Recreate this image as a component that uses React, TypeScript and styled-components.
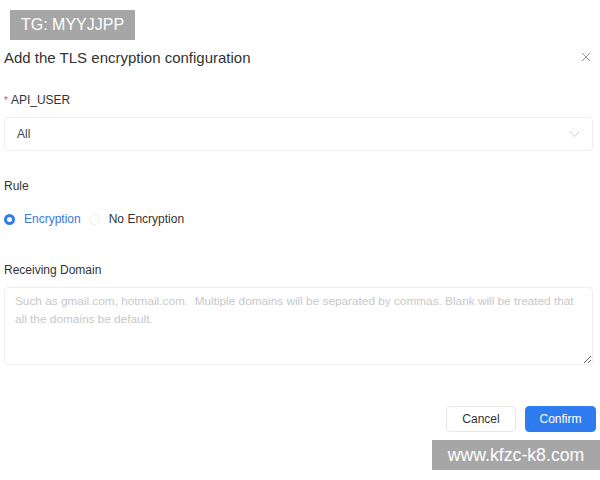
import React from "react";
import styled, { createGlobalStyle } from "styled-components";

const GlobalStyle = createGlobalStyle`
  body {
    margin: 0;
    background: #fff;
    font-family: "Liberation Sans", Arial, sans-serif;
  }
`;

const Page = styled.div`
  position: relative;
  width: 600px;
  height: 480px;
  box-sizing: border-box;
  padding: 44px 7px 0 4px;
  overflow: hidden;
`;

const Watermark = styled.div<{ top: number; left: number; w: number; size: number }>`
  position: absolute;
  top: ${(p) => p.top}px;
  left: ${(p) => p.left}px;
  width: ${(p) => p.w}px;
  height: 30px;
  background: #a6a6a6;
  color: #fff;
  font-size: ${(p) => p.size}px;
  line-height: 30px;
  text-align: center;
`;

const Header = styled.div`
  display: flex;
  align-items: center;
  justify-content: space-between;
  height: 26px;
`;

const Title = styled.div`
  font-size: 15px;
  color: #333;
`;

const Close = styled.button`
  width: 14px;
  height: 14px;
  padding: 0;
  border: none;
  background: none;
  display: flex;
  align-items: center;
  justify-content: center;
`;

const Label = styled.div<{ gap: number }>`
  margin-top: ${(p) => p.gap}px;
  font-size: 12px;
  line-height: 16px;
  color: #333;
`;

const Star = styled.span`
  color: #e5484d;
  margin-right: 3px;
  font-size: 10px;
`;

const Select = styled.div`
  margin-top: 8px;
  height: 34px;
  box-sizing: border-box;
  border: 1px solid #eeeeee;
  border-radius: 4px;
  display: flex;
  align-items: center;
  justify-content: space-between;
  padding: 0 12px;
  font-size: 12px;
  color: #444;
`;

const RadioRow = styled.div`
  margin-top: 17px;
  display: flex;
  align-items: center;
  height: 16px;
  font-size: 12px;
`;

const RadioOption = styled.label<{ checked?: boolean }>`
  display: flex;
  align-items: center;
  gap: 9px;
  margin-right: 8px;
  color: ${(p) => (p.checked ? "#3b78d8" : "#333")};
`;

const RadioDot = styled.span<{ checked?: boolean }>`
  width: 11px;
  height: 11px;
  box-sizing: border-box;
  border-radius: 50%;
  border: ${(p) => (p.checked ? "3px solid #2f7cf0" : "1px solid #eeeeee")};
  background: #fff;
`;

const TextArea = styled.textarea`
  display: block;
  margin-top: 9px;
  width: 100%;
  height: 78px;
  box-sizing: border-box;
  border: 1px solid #eeeeee;
  border-radius: 4px;
  padding: 4px 6px 4px 10px;
  font-family: "Liberation Sans", Arial, sans-serif;
  font-size: 11.8px;
  line-height: 18px;
  color: #333;
  outline: none;
  overflow: hidden;
  &::placeholder {
    color: #c8c8c8;
  }
`;

const Footer = styled.div`
  margin-top: 41px;
  margin-right: -3px;
  display: flex;
  justify-content: flex-end;
  gap: 9px;
`;

const Button = styled.button<{ primary?: boolean }>`
  height: 26px;
  width: ${(p) => (p.primary ? 71 : 70)}px;
  border-radius: 4px;
  font-family: "Liberation Sans", Arial, sans-serif;
  font-size: 12px;
  border: 1px solid ${(p) => (p.primary ? "#2f7cf0" : "#e8e8e8")};
  background: ${(p) => (p.primary ? "#2f7cf0" : "#fff")};
  color: ${(p) => (p.primary ? "#fff" : "#333")};
  padding: 0;
`;

export default function App() {
  return (
    <Page>
      <GlobalStyle />
      <Header>
        <Title>Add the TLS encryption configuration</Title>
        <Close aria-label="close">
          <svg width="10" height="10" viewBox="0 0 10 10">
            <path d="M1 1L9 9M9 1L1 9" stroke="#999" strokeWidth="1" />
          </svg>
        </Close>
      </Header>

      <Label gap={22}>
        <Star>*</Star>API_USER
      </Label>
      <Select>
        <span>All</span>
        <svg width="11" height="7" viewBox="0 0 11 7">
          <path d="M1 1L5.5 5.5L10 1" stroke="#ccc" fill="none" strokeWidth="1" />
        </svg>
      </Select>

      <Label gap={27}>Rule</Label>
      <RadioRow>
        <RadioOption checked>
          <RadioDot checked />
          Encryption
        </RadioOption>
        <RadioOption>
          <RadioDot />
          No Encryption
        </RadioOption>
      </RadioRow>

      <Label gap={35}>Receiving Domain</Label>
      <TextArea
        placeholder={
          "Such as gmail.com, hotmail.com.  Multiple domains will be separated by commas. Blank will be treated that\nall the domains be default."
        }
      />

      <Footer>
        <Button>Cancel</Button>
        <Button primary>Confirm</Button>
      </Footer>

      <Watermark top={10} left={10} w={125} size={16}>
        TG: MYYJJPP
      </Watermark>
      <Watermark top={440} left={432} w={168} size={17.7}>
        www.kfzc-k8.com
      </Watermark>
    </Page>
  );
}
